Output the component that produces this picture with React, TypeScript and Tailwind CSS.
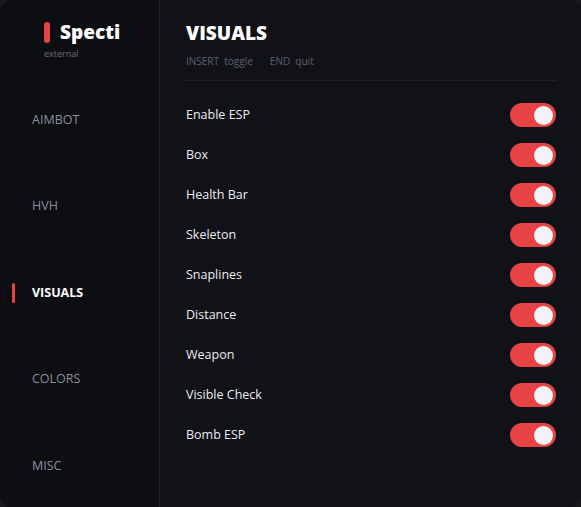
import React from "react";

const navItems = ["AIMBOT", "HVH", "VISUALS", "COLORS", "MISC"];

const options = [
  "Enable ESP",
  "Box",
  "Health Bar",
  "Skeleton",
  "Snaplines",
  "Distance",
  "Weapon",
  "Visible Check",
  "Bomb ESP",
];

const Toggle = () => (
  <div className="w-[46px] h-[24px] rounded-full bg-[#e84343] flex items-center justify-end pr-[3px]">
    <div className="w-[19px] h-[19px] rounded-full bg-[#f2f2f7]" />
  </div>
);

export default function App() {
  return (
    <div
      className="w-[581px] h-[507px] bg-[#18181b]"
      style={{ fontFamily: '"Open Sans", "Noto Sans", sans-serif' }}
    >
      <div className="w-full h-full flex rounded-[12px] overflow-hidden bg-[#111217]">
        <aside className="w-[160px] shrink-0 bg-[#0d0e12] border-r border-[#1e1f24] flex flex-col">
          <div className="pl-[44px] pt-[22px]">
            <div className="flex items-center gap-[10px]">
              <div className="w-[6px] h-[21px] rounded-full bg-[#e84343]" />
              <span className="text-[19px] font-extrabold text-white leading-none">
                Specti
              </span>
            </div>
            <div className="text-[9px] text-[#6b6e78] mt-[6px] leading-none">
              external
            </div>
          </div>
          <nav className="flex flex-col mt-[19px]">
            {navItems.map((item) => {
              const active = item === "VISUALS";
              return (
                <div key={item} className="relative h-[86.5px] flex items-center pl-[32px]">
                  {active && (
                    <div className="absolute left-[12px] top-1/2 -translate-y-1/2 w-[3px] h-[20px] rounded-full bg-[#e84343]" />
                  )}
                  <span
                    className={
                      active
                        ? "text-[12.5px] font-bold text-white"
                        : "text-[12.5px] text-[#8a8f9e]"
                    }
                  >
                    {item}
                  </span>
                </div>
              );
            })}
          </nav>
        </aside>
        <main className="flex-1 pl-[26px] pr-[25px] pt-[24px]">
          <h1 className="text-[19px] font-black text-white leading-none">VISUALS</h1>
          <div className="text-[10px] text-[#5d606b] mt-[13px] leading-none flex gap-[17px]">
            <span>INSERT&nbsp;&nbsp;toggle</span>
            <span>END&nbsp;&nbsp;quit</span>
          </div>
          <div className="h-px bg-[#1f2026] mt-[14px]" />
          <div className="flex flex-col mt-[14px]">
            {options.map((opt) => (
              <div key={opt} className="h-[40px] flex items-center justify-between">
                <span className="text-[12.5px] text-[#ececf1]">{opt}</span>
                <Toggle />
              </div>
            ))}
          </div>
        </main>
      </div>
    </div>
  );
}
